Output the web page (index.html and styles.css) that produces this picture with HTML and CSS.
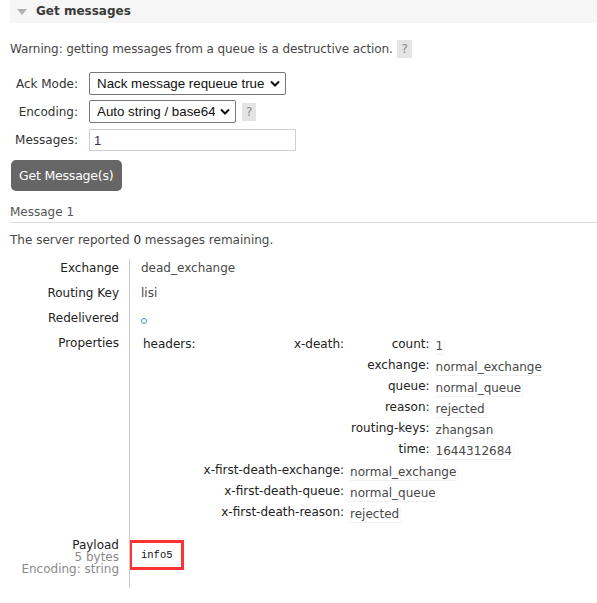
FILE: index.html
```html
<!DOCTYPE html>
<html>
<head>
<meta charset="utf-8">
<link rel="stylesheet" href="styles.css">
</head>
<body>
<div class="section">
  <h2 class="section-head"><svg class="tri" width="10" height="6" viewBox="0 0 10 6"><path d="M0 0H10L5 6Z" fill="#b0b0b0"/></svg><span>Get messages</span></h2>
  <div class="section-body">
    <p class="warn">Warning: getting messages from a queue is a destructive action. <span class="help">?</span></p>
    <table class="form">
      <tr>
        <th>Ack Mode:</th>
        <td><span class="sel"><select class="sel-ack"><option>Nack message requeue true</option></select><svg class="chev" width="10" height="7" viewBox="0 0 10 7"><path d="M1 1.5l4 4 4-4" fill="none" stroke="#111" stroke-width="2"/></svg></span></td>
      </tr>
      <tr>
        <th>Encoding:</th>
        <td class="enc"><span class="sel"><select class="sel-enc"><option>Auto string / base64</option></select><svg class="chev" width="10" height="7" viewBox="0 0 10 7"><path d="M1 1.5l4 4 4-4" fill="none" stroke="#111" stroke-width="2"/></svg></span><span class="help">?</span></td>
      </tr>
      <tr>
        <th>Messages:</th>
        <td><input class="count" type="text" value="1"></td>
      </tr>
    </table>
    <button class="btn">Get Message(s)</button>
    <h3 class="msg-title">Message 1</h3>
    <p class="remain">The server reported <span class="num">0</span> messages remaining.</p>
    <table class="facts">
      <tr><th>Exchange</th><td>dead_exchange</td></tr>
      <tr><th>Routing Key</th><td>lisi</td></tr>
      <tr><th>Redelivered</th><td><span class="bool"></span></td></tr>
      <tr><th>Properties</th><td class="props">
        <table class="mini">
          <tr><th class="hdr">headers:</th><td class="nest">
            <table class="mini">
              <tr><th>x-death:</th><td class="nest">
                <table class="mini">
                  <tr><th>count:</th><td><span class="v">1</span></td></tr>
                  <tr><th>exchange:</th><td><span class="v">normal_exchange</span></td></tr>
                  <tr><th>queue:</th><td><span class="v">normal_queue</span></td></tr>
                  <tr><th>reason:</th><td><span class="v">rejected</span></td></tr>
                  <tr><th>routing-keys:</th><td><span class="v">zhangsan</span></td></tr>
                  <tr><th>time:</th><td><span class="v">1644312684</span></td></tr>
                </table>
              </td></tr>
              <tr><th>x-first-death-exchange:</th><td><span class="v">normal_exchange</span></td></tr>
              <tr><th>x-first-death-queue:</th><td><span class="v">normal_queue</span></td></tr>
              <tr><th>x-first-death-reason:</th><td><span class="v">rejected</span></td></tr>
            </table>
          </td></tr>
        </table>
      </td></tr>
      <tr class="payload"><th>Payload<span class="sub">5 bytes</span><span class="sub">Encoding: string</span></th><td><pre class="body-pre">info5</pre></td></tr>
    </table>
  </div>
</div>
</body>
</html>
```
FILE: styles.css
```css
html, body {
  background: #fff;
}
body {
  margin: 0;
  padding: 0 0 0 10px;
  font-family: "DejaVu Sans", Verdana, sans-serif;
  font-size: 12px;
  line-height: 15px;
  color: #484848;
}
.section-head {
  margin: 0;
  height: 23px;
  background: #f6f6f6;
  display: flex;
  align-items: center;
  gap: 9px;
  padding-left: 7px;
  font-size: 12px;
  font-weight: bold;
  color: #3a3a3a;
}
.tri { display: block; margin-top: 1px; }
.warn {
  margin: 17px 0 0;
  line-height: 18px;
  letter-spacing: -0.1px;
}
.help {
  display: inline-block;
  background: #e4e4e4;
  color: #888;
  padding: 0 4px;
  line-height: 18px;
  margin-left: 1px;
}
.form {
  border-collapse: collapse;
  margin-top: 12px;
}
.form th {
  font-weight: normal;
  text-align: right;
  width: 68px;
  padding: 0 11px 0 0;
  color: #333;
  white-space: nowrap;
}
.form td {
  padding: 2px 0 3px;
}
.form td.enc {
  display: flex;
  align-items: center;
  gap: 5px;
}
.sel {
  position: relative;
  display: inline-block;
}
.sel select {
  appearance: none;
  -webkit-appearance: none;
  display: block;
  height: 23px;
  border: 1px solid #767676;
  border-radius: 2px;
  background: #fff;
  color: #111;
  font-family: "Liberation Sans", Arial, sans-serif;
  font-size: 13.33px;
  padding: 0 20px 0 7px;
  margin: 0;
}
.sel-ack { width: 197px; }
.sel-enc { width: 147px; }
.chev {
  position: absolute;
  right: 6px;
  top: 8px;
  pointer-events: none;
}
.count {
  display: block;
  width: 207px;
  height: 22px;
  box-sizing: border-box;
  border: 1px solid #cfcfcf;
  padding: 0 4px;
  margin: 1px 0 0;
  font-family: "Liberation Sans", Arial, sans-serif;
  font-size: 13px;
  color: #4a2a5a;
}
.btn {
  display: block;
  margin-top: 6px;
  margin-left: 1px;
  height: 31px;
  padding: 0 8px;
  border: none;
  border-radius: 5px;
  background: #666;
  color: #fff;
  font-family: "DejaVu Sans", Verdana, sans-serif;
  font-size: 12.5px;
  letter-spacing: -0.2px;
}
.msg-title {
  margin: 14px 0 0;
  font-size: 12px;
  font-weight: normal;
  color: #555;
  padding-bottom: 2px;
  border-bottom: 1px solid #ddd;
}
.remain {
  margin: 10px 0 0;
}
.num { color: #222; }
.facts {
  border-collapse: collapse;
  margin-top: 11px;
}
.facts > tbody > tr > th {
  width: 109px;
  text-align: right;
  vertical-align: top;
  font-weight: normal;
  color: #222;
  padding: 2px 10px 8px 0;
  border-right: 1px solid #ccc;
  white-space: nowrap;
}
.facts > tbody > tr > td {
  vertical-align: top;
  padding: 2px 0 8px 11px;
}
.facts > tbody > tr > td.props {
  padding-top: 0;
  padding-bottom: 14px;
}
.bool {
  display: inline-block;
  width: 4px;
  height: 4px;
  border: 1px solid #4f8fcf;
  border-radius: 50%;
  vertical-align: -2px;
}
.mini {
  border-collapse: collapse;
}
.mini th {
  text-align: right;
  vertical-align: top;
  font-weight: normal;
  white-space: nowrap;
  color: #222;
  padding: 3px 5px 3px 2px;
}
.mini th.hdr {
  text-align: left;
  padding-right: 6px;
}
.mini td {
  vertical-align: top;
  padding: 3px 0;
  white-space: nowrap;
}
.mini td.nest {
  padding: 0;
}
.v {
  padding: 0 1px 1px;
  border-bottom: 1px dotted #e2e2e2;
  border-right: 1px dotted #eee;
  border-radius: 2px;
  position: relative;
  top: 2px;
}
.payload > th {
  line-height: 12px;
  padding-top: 2px;
  padding-bottom: 13px !important;
}
.sub {
  display: block;
  color: #8a8a8a;
}
.body-pre {
  margin: 1px 0 0 -12px;
  width: 55px;
  height: 30px;
  box-sizing: border-box;
  border: 3px solid #f33;
  padding: 0 0 0 9px;
  font-family: "Liberation Mono", monospace;
  font-size: 10.5px;
  line-height: 24px;
  color: #111;
}
```
